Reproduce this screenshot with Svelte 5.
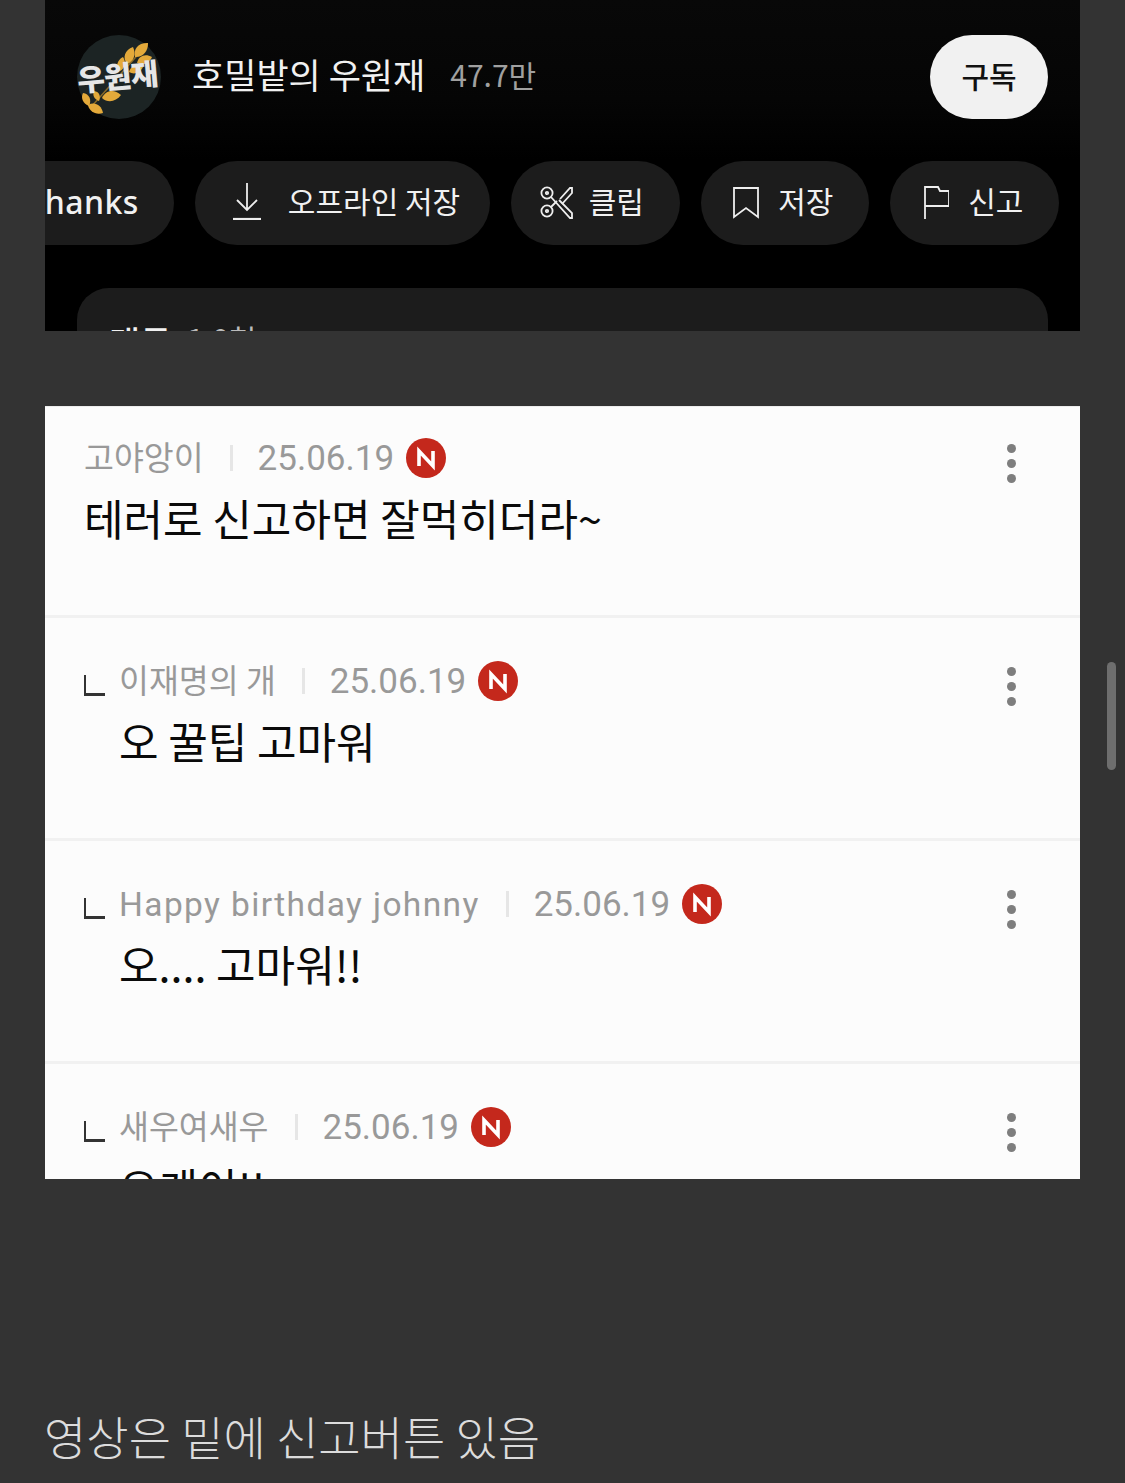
<script>
	const comments = [
		{ name: '고야앙이', text: '테러로 신고하면 잘먹히더라~', reply: false },
		{ name: '이재명의 개', text: '오 꿀팁 고마워', reply: true },
		{ name: 'Happy birthday johnny', text: '오.... 고마워!!', reply: true, latin: true },
		{ name: '새우여새우', text: '오케이!!', reply: true }
	];

	// wheat leaves on the avatar, from stem to tip
	const leaves = [
		[58, 22, 71, 8],
		[50, 29, 56, 12],
		[60, 28, 75, 22],
		[43, 36, 46, 22],
		[52, 37, 66, 32],
		[25, 63, 44, 60],
		[11, 70, 26, 78],
		[6, 58, 12, 71],
		[17, 56, 22, 66]
	];

	function leafTransform([x1, y1, x2, y2]) {
		const len = Math.hypot(x2 - x1, y2 - y1);
		const angle = (Math.atan2(y2 - y1, x2 - x1) * 180) / Math.PI;
		return `translate(${x1} ${y1}) rotate(${angle}) scale(${len / 16})`;
	}
</script>

<div class="page">
	<section class="video">
		<div class="channel">
			<div class="avatar">
				<svg viewBox="0 0 84 84" width="84" height="84">
					<circle cx="42" cy="42" r="42" fill="#1c2424" />
					<path d="M14 72 L66 14" stroke="#8a6a26" stroke-width="1.5" fill="none" />
					{#each leaves as l}
						<path d="M0 0 C4 -6 11 -6 16 0 C11 5 4 5 0 0" fill="#e3a93a" transform={leafTransform(l)} />
					{/each}
				</svg>
				<span class="avatar-text">우원재</span>
			</div>
			<span class="channel-name">호밀밭의 우원재</span>
			<span class="subs">47.7만</span>
			<button class="subscribe">구독</button>
		</div>

		<div class="actions">
			<div class="chip chip-thanks">Thanks</div>
			<div class="chip chip-offline">
				<svg viewBox="0 0 28 37" width="28" height="37" fill="none" stroke="#eee" stroke-width="1.8">
					<path d="M14 0 V27 M4 17 L14 27 L24 17" />
					<path d="M0 36 H28" stroke-width="2.2" />
				</svg>
				<span>오프라인 저장</span>
			</div>
			<div class="chip chip-clip">
				<svg viewBox="0 0 33 33" width="33" height="33" fill="none" stroke="#eee" stroke-width="1.8">
					<circle cx="7" cy="7" r="5.6" />
					<circle cx="7" cy="25" r="5.6" />
					<circle cx="7" cy="7" r="1.2" />
					<circle cx="7" cy="25" r="1.2" />
					<path d="M11 11 L30 32 H32 V27 L19 14" />
					<path d="M11 21 L17 15 M22 18 L32 7 V2 H30 L20 13" />
				</svg>
				<span>클립</span>
			</div>
			<div class="chip">
				<svg viewBox="0 0 26 32" width="26" height="32" fill="none" stroke="#eee" stroke-width="1.8">
					<path d="M1 1 H25 V30 L13 21 L1 30 Z" />
				</svg>
				<span>저장</span>
			</div>
			<div class="chip">
				<svg viewBox="0 0 27 33" width="27" height="33" fill="none" stroke="#eee" stroke-width="1.8">
					<path d="M3 33 V1 H16 L18 5 H27 V20 H3" />
				</svg>
				<span>신고</span>
			</div>
		</div>

		<div class="comments-card">
			<span class="card-title">댓글</span>
			<span class="card-count">1.0천</span>
		</div>
	</section>

	<section class="comments">
		{#each comments as c}
			<div class="comment" class:reply={c.reply}>
				<div class="comment-main">
					<div class="meta">
						{#if c.reply}
							<span class="reply-mark"></span>
						{/if}
						<span class="name" class:latin={c.latin}>{c.name}</span>
						<span class="sep"></span>
						<span class="date">25.06.19</span>
						<span class="new">
							<svg viewBox="0 0 40 40" width="40" height="40">
								<circle cx="20" cy="20" r="20" fill="#c4281c" />
								<path d="M13 28 V13 L27 28 V13" fill="none" stroke="#fff" stroke-width="3.6" />
							</svg>
						</span>
					</div>
					<p class="text">{c.text}</p>
				</div>
				<div class="more"><i></i><i></i><i></i></div>
			</div>
		{/each}
	</section>

	<p class="caption">영상은 밑에 신고버튼 있음</p>

	<div class="scrollbar"></div>
</div>

<style>
	:global(body) {
		margin: 0;
		background: #333333;
	}

	.page {
		position: relative;
		height: 1483px;
		overflow: hidden;
		background: #333333;
		font-family: 'Noto Sans CJK KR', 'Noto Sans', sans-serif;
	}

	.video {
		margin: 0 45px;
		height: 331px;
		background: linear-gradient(#080808, #050505 100px, #000 160px);
		overflow: hidden;
	}

	.channel {
		display: flex;
		align-items: center;
		height: 84px;
		padding: 35px 32px 0;
	}

	.avatar {
		position: relative;
		width: 84px;
		height: 84px;
		flex: none;
	}

	.avatar svg {
		display: block;
	}

	.avatar-text {
		position: absolute;
		left: 0;
		top: 20px;
		font-size: 30px;
		line-height: 40px;
		font-weight: 900;
		letter-spacing: -0.8px;
		white-space: nowrap;
		color: #e6e6e6;
		transform: rotate(-5deg);
	}

	.channel-name {
		margin: 0 0 6px 31px;
		font-size: 35px;
		line-height: 78px;
		color: #f1f1f1;
		white-space: nowrap;
	}

	.subs {
		margin: 0 0 6px 25px;
		font-size: 30px;
		color: #a0a0a0;
		white-space: nowrap;
	}

	.subscribe {
		margin-left: auto;
		width: 118px;
		height: 84px;
		border: 0;
		border-radius: 42px;
		background: #f1f1f1;
		color: #111;
		font: inherit;
		font-size: 30px;
		font-weight: 500;
		padding: 0 0 4px;
	}

	.actions {
		display: flex;
		gap: 21px;
		margin: 42px 0 0 -66px;
	}

	.chip {
		display: flex;
		align-items: center;
		justify-content: center;
		gap: 19px;
		flex: none;
		box-sizing: border-box;
		width: 168.5px;
		height: 84px;
		padding-right: 3px;
		border-radius: 42px;
		background: #1c1c1c;
		color: #f1f1f1;
		font-size: 30px;
		white-space: nowrap;
	}

	.chip span {
		margin-bottom: 6px;
	}

	.chip svg {
		margin-bottom: 1px;
		flex: none;
	}

	.chip-thanks {
		width: 195px;
		padding: 0 0 4px 12px;
		font-family: 'Noto Sans', sans-serif;
		font-weight: 500;
		font-size: 32px;
		letter-spacing: 0.4px;
	}

	.chip-offline {
		width: 295px;
		gap: 27px;
		padding: 0 0 0 8px;
	}

	.chip-offline svg {
		margin-bottom: 3px;
	}

	.chip-clip {
		gap: 16px;
		padding-right: 7px;
	}

	.comments-card {
		margin: 43px 32px 0;
		height: 120px;
		padding: 29px 32px;
		border-radius: 32px 32px 0 0;
		background: #1c1c1c;
		color: #f1f1f1;
		font-size: 34px;
		font-weight: 500;
		line-height: 50px;
	}

	.card-count {
		display: inline-block;
		margin-left: 8px;
		font-weight: 400;
		color: #bbb;
		font-size: 30px;
		transform: translateY(-5px);
	}

	.comments {
		margin: 75px 45px 0;
		height: 772px;
		border-top: 1px solid #ededed;
		background: #fcfcfc;
		overflow: hidden;
	}

	.comment {
		display: flex;
		justify-content: space-between;
		height: 197px;
		padding: 11px 64px 0 39px;
		border-bottom: 3px solid #f1f1f1;
	}

	.comment.reply {
		height: 197px;
		padding-top: 23px;
	}

	.meta {
		display: flex;
		align-items: center;
		height: 56px;
		margin-top: 12px;
		color: #999;
	}

	.reply-mark {
		box-sizing: border-box;
		width: 21px;
		height: 21px;
		margin: 8px 14px 0 0;
		border-left: 2px solid #333;
		border-bottom: 3px solid #333;
	}

	.name {
		margin-bottom: 5px;
		font-size: 32.5px;
		white-space: nowrap;
	}

	.name.latin {
		margin-bottom: 0;
		font-family: 'Roboto', sans-serif;
		font-size: 33.5px;
		letter-spacing: 1.38px;
	}

	.sep {
		width: 3px;
		height: 26px;
		margin: 0 25px 0 26px;
		background: #e6e6e6;
	}

	.date {
		font-family: 'Roboto', sans-serif;
		font-size: 35px;
		white-space: nowrap;
	}

	.new {
		margin-left: 12px;
		height: 40px;
	}

	.new svg {
		display: block;
	}

	.text {
		margin: 0;
		font-size: 43px;
		line-height: 62px;
		color: #0a0a0a;
		white-space: nowrap;
	}

	.reply .text {
		margin-left: 35px;
	}

	.more {
		display: flex;
		flex-direction: column;
		gap: 6px;
		margin-top: 26px;
	}

	.more i {
		display: block;
		width: 9px;
		height: 9px;
		border-radius: 50%;
		background: #7e7e7e;
	}

	.caption {
		margin: 221px 44px 0;
		font-size: 46px;
		line-height: 70px;
		font-weight: 300;
		color: #dcdcdc;
		white-space: nowrap;
	}

	.scrollbar {
		position: absolute;
		left: 1107px;
		top: 662px;
		width: 9px;
		height: 108px;
		border-radius: 5px;
		background: #6e6e6e;
	}
</style>
